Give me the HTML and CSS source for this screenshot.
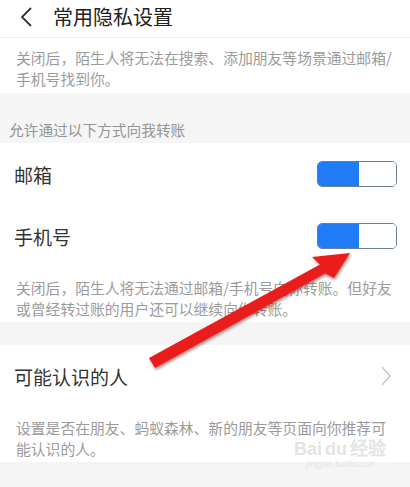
FILE: index.html
```html
<!DOCTYPE html>
<html lang="zh-CN">
<head>
    <meta charset="UTF-8">
    <meta name="viewport" content="width=device-width, initial-scale=1.0">
    <title>常用隐私设置</title>
    <link rel="stylesheet" href="styles.css">
</head>
<body>
    <div class="page">
        <div class="top-bar">
            <svg class="back" width="15" height="20" viewBox="0 0 15 20">
                <path d="M12 1 L3 10 L12 19" fill="none" stroke="#333" stroke-width="1.8"/>
            </svg>
            <div class="title">常用隐私设置</div>
        </div>

        <div class="card">
            <div class="note first">关闭后，陌生人将无法在搜索、添加朋友等场景通过邮箱/手机号找到你。</div>
        </div>

        <div class="group-title">允许通过以下方式向我转账</div>

        <div class="card">
            <div class="row">
                <span class="label">邮箱</span>
                <span class="toggle"><span class="on"></span><span class="off"></span></span>
            </div>
            <div class="row">
                <span class="label">手机号</span>
                <span class="toggle"><span class="on"></span><span class="off"></span></span>
            </div>
            <div class="note">关闭后，陌生人将无法通过邮箱/手机号向你转账。但好友或曾经转过账的用户还可以继续向你转账。</div>
        </div>

        <div class="gap"></div>

        <div class="card">
            <div class="row">
                <span class="label">可能认识的人</span>
                <svg class="more" width="12" height="20" viewBox="0 0 12 20">
                    <path d="M2 1 L10 10 L2 19" fill="none" stroke="#c8c8c8" stroke-width="1.4"/>
                </svg>
            </div>
            <div class="note">设置是否在朋友、蚂蚁森林、新的朋友等页面向你推荐可能认识的人。</div>
        </div>

        <div class="gap"></div>
    </div>

    <svg class="arrow" width="410" height="487" viewBox="0 0 410 487">
        <defs>
            <filter id="shade" x="-10%" y="-10%" width="130%" height="130%">
                <feDropShadow dx="1" dy="2" stdDeviation="1.5" flood-color="#400" flood-opacity="0.45"/>
            </filter>
        </defs>
        <polygon filter="url(#shade)" fill="#ea1a1a"
                 points="149,358 320,264.5 312,257 350,253 334,278 325,273.5 155,368"/>
    </svg>

    <div class="watermark">
        <div class="wm-logo">Bai<span class="wm-du">du</span>经验</div>
        <div class="wm-url">jingyan.baidu.com</div>
    </div>
</body>
</html>
```

FILE: styles.css
```css
body, html {
    margin: 0;
    padding: 0;
    background-color: #f5f5f5;
    font-family: "Noto Sans CJK SC", "Noto Sans", sans-serif;
}
.page {
    width: 410px;
    min-height: 487px;
    background-color: #f5f5f5;
}
.top-bar {
    display: flex;
    align-items: center;
    height: 42px;
    background-color: white;
    border-bottom: 1px solid #efefef;
    box-sizing: border-box;
    margin-top: -4px;
    padding-left: 19px;
}
.back {
    margin-right: 19px;
}
.title {
    font-size: 20px;
    color: #222;
}
.card {
    background-color: white;
}
.note {
    padding: 10px 15px 3px 16px;
    font-size: 14.8px;
    line-height: 21px;
    color: #9b9b9b;
}
.note.first {
    padding-top: 9px;
    padding-bottom: 4px;
}
.group-title {
    padding: 27px 9px 3px 9px;
    font-size: 14.7px;
    line-height: 20px;
    color: #949494;
}
.row {
    display: flex;
    align-items: center;
    justify-content: space-between;
    height: 62px;
    padding: 0 13px 0 14px;
}
.label {
    font-size: 19px;
    color: #333;
}
.toggle {
    display: flex;
    width: 80px;
    height: 26px;
    border-radius: 5px;
    overflow: hidden;
    box-sizing: border-box;
    border: 1px solid #6f7d90;
}
.toggle .on {
    width: 41px;
    background-color: #1f7cf6;
}
.toggle .off {
    flex-grow: 1;
    background-color: white;
}
.more {
    margin-right: 5px;
}
.gap {
    height: 23px;
}
.arrow {
    position: absolute;
    top: 0;
    left: 0;
    pointer-events: none;
}
.watermark {
    position: absolute;
    left: 294px;
    top: 439px;
    color: #e4e4e4;
    text-align: center;
}
.wm-logo {
    font-family: "Liberation Sans", sans-serif;
    font-size: 18px;
    font-weight: bold;
    line-height: 20px;
}
.wm-du {
    margin: 0 3px;
}
.wm-url {
    font-size: 8px;
    line-height: 10px;
}
```
